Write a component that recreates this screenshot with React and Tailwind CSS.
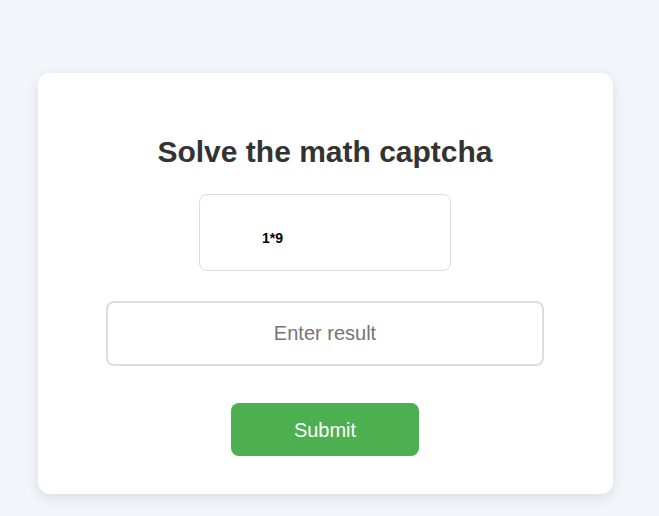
import React from "react";

export default function App() {
  return (
    <div
      className="min-h-[516px] w-full bg-[#f2f5f9] flex justify-start pl-[38px] pt-[73px]"
      style={{ fontFamily: '"Liberation Sans", Arial, sans-serif' }}
    >
      <div className="w-[575px] h-[421px] bg-white rounded-[12px] shadow-[0_4px_14px_rgba(0,0,0,0.1)] flex flex-col items-center pt-[62px] pr-px">
        <h2 className="text-[30px] leading-[34px] font-bold text-[#333333]">
          Solve the math captcha
        </h2>
        <div className="mt-[25px] w-[252px] h-[77px] border border-[#dddddd] rounded-[8px] pl-[62px] pt-[36px]">
          <div className="text-[14px] leading-[14px] font-bold text-black">1*9</div>
        </div>
        <input
          type="text"
          placeholder="Enter result"
          className="mt-[30px] w-[438px] h-[65px] border-2 border-[#dddddd] rounded-[8px] text-center text-[20px] text-[#333] placeholder:text-[#757575] outline-none"
          style={{ fontFamily: '"Liberation Sans", Arial, sans-serif' }}
        />
        <button
          className="mt-[37px] w-[188px] h-[53px] bg-[#4caf50] rounded-[8px] text-white text-[20px]"
          style={{ fontFamily: '"Liberation Sans", Arial, sans-serif' }}
        >
          Submit
        </button>
      </div>
    </div>
  );
}
